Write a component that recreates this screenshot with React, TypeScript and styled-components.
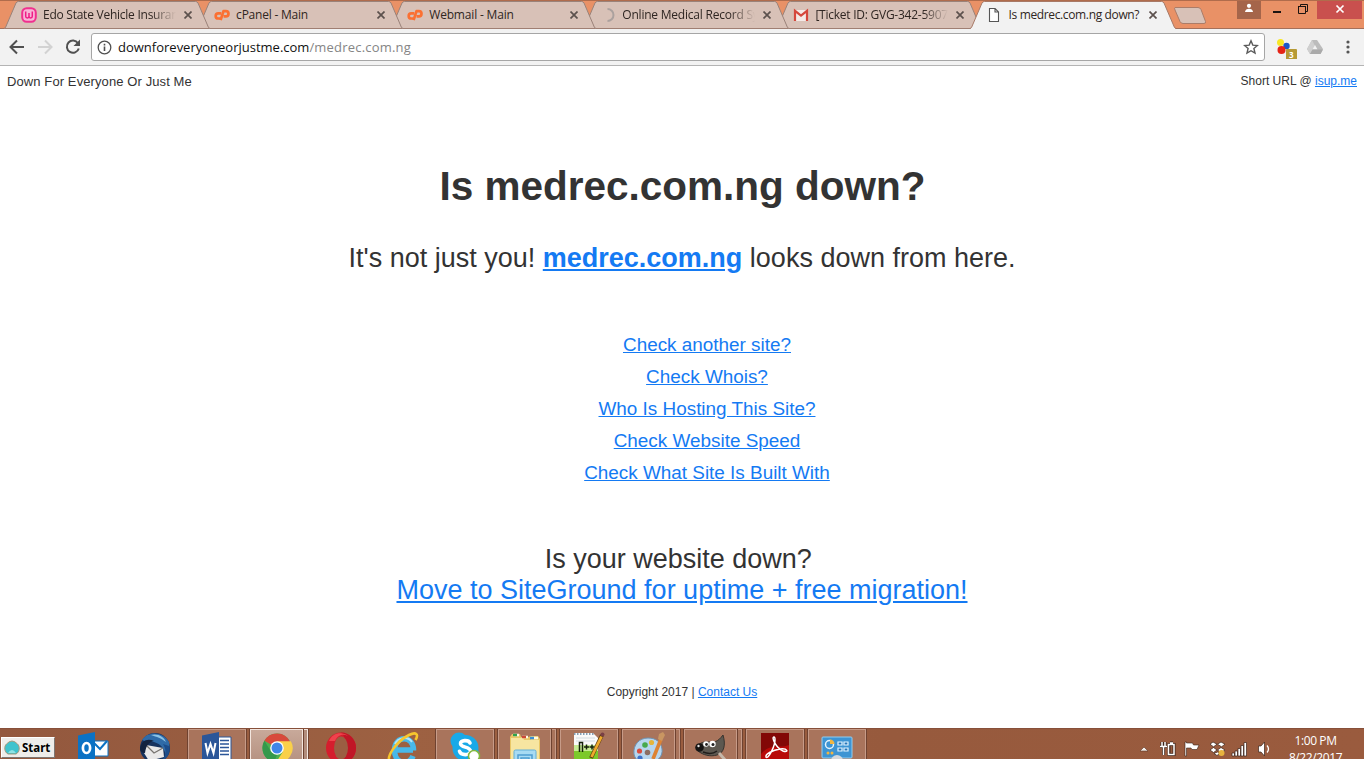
import React from "react";
import styled, { createGlobalStyle, css } from "styled-components";

const GlobalStyle = createGlobalStyle`
  *, *::before, *::after { box-sizing: border-box; }
  html, body { margin: 0; padding: 0; background: #fff; overflow: hidden; }
  svg { display: block; flex: none; }
`;

const uiFont = `"Open Sans", "Noto Sans", sans-serif`;

const Screen = styled.div`
  width: 1364px;
  height: 759px;
  display: flex;
  flex-direction: column;
  overflow: hidden;
  font-family: "Liberation Sans", Arial, sans-serif;
  color: #333;
`;

/* ---------- Browser frame ---------- */

const TitleBar = styled.header`
  flex: none;
  height: 29px;
  display: flex;
  background: #e99166;
  border-top: 1px solid #b06c4c;
  box-shadow: inset 0 -1px 0 #a4705a;
  padding-left: 4px;
`;

const TabItem = styled.div<{ $layer: number }>`
  position: relative;
  z-index: ${(p) => p.$layer};
  flex: none;
  width: 206px;
  height: 28px;
  margin-right: -12.9px;
  padding-left: 17px;
  display: flex;
  align-items: center;
  isolation: isolate;
`;

const TabShape = styled.svg`
  position: absolute;
  inset: 0;
  z-index: -1;
`;

const Favicon = styled.svg`
  width: 16px;
  height: 16px;
`;

const TabLabel = styled.span<{ $track: number; $fade?: boolean }>`
  width: 133px;
  margin-left: 6px;
  overflow: hidden;
  white-space: nowrap;
  font: 12px/18px ${uiFont};
  letter-spacing: ${(p) => p.$track}px;
  color: #2f2622;
  ${(p) =>
    p.$fade &&
    css`
      mask-image: linear-gradient(to right, #000 108px, transparent 133px);
    `}
`;

const CloseIcon = styled.svg`
  margin-left: 7.500px;
`;

const NewTab = styled.svg`
  margin: 5px 0 0 5px;
`;

const WindowControls = styled.div`
  display: flex;
  align-items: flex-start;
  margin-left: auto;
  padding-right: 2px;
`;

const ControlButton = styled.div<{ $w: number; $bg?: string }>`
  width: ${(p) => p.$w}px;
  height: 18px;
  display: flex;
  justify-content: center;
  background: ${(p) => p.$bg ?? "transparent"};
`;

const Toolbar = styled.div`
  flex: none;
  height: 37px;
  display: flex;
  align-items: center;
  background: #f2f2f2;
  border-bottom: 1px solid #b4b4b4;
  padding: 0 7px 0 8px;
`;

const NavIcons = styled.div`
  width: 83px;
  display: flex;
  gap: 10px;
`;

const Omnibox = styled.div`
  width: 1174px;
  height: 28px;
  display: flex;
  align-items: center;
  background: #fff;
  border: 1px solid #a6a6a6;
  border-radius: 3px;
  padding: 0 5px;
`;

const Url = styled.span`
  flex: 1;
  margin-left: 6px;
  font: 13px/20px ${uiFont};
  color: #111;
`;

const UrlPath = styled.span`
  color: #858585;
  letter-spacing: 0.2px;
`;

const Extensions = styled.div`
  flex: 1;
  display: flex;
  align-items: center;
  padding-left: 11px;
`;

const DriveIcon = styled.svg`
  margin-left: 8px;
`;

const MenuDots = styled.svg`
  margin-left: 22px;
`;

/* ---------- Page ---------- */

const Page = styled.main`
  flex: 1;
  min-height: 0;
  display: flex;
  flex-direction: column;
  background: #fff;
`;

const PageTop = styled.div`
  height: 30px;
  display: flex;
  justify-content: space-between;
  padding: 7px 7px 0;
`;

const SiteName = styled.span`
  font-size: 13px;
  line-height: 17px;
  letter-spacing: 0.1px;
`;

const ShortUrl = styled.span`
  font-size: 12px;
  line-height: 16px;
`;

const Link = styled.a`
  color: #147af3;
  text-decoration: underline;
`;

const Heading = styled.h1`
  margin: 66px 0 0;
  padding-left: 1px;
  font-size: 40.5px;
  line-height: 48px;
  text-align: center;
`;

const Verdict = styled.p`
  margin: 32px 0 0;
  font-size: 27px;
  line-height: 32px;
  text-align: center;
`;

const LinkList = styled.ul`
  list-style: none;
  margin: 55px 0 0;
  padding: 0 0 0 50px;
  font-size: 18.9px;
  line-height: 32px;
  text-align: center;
`;

const Promo = styled.p`
  margin: 55px 0 0;
  font-size: 27px;
  line-height: 31px;
  text-align: center;
`;

const Footer = styled.footer`
  margin-top: 78px;
  font-size: 12px;
  line-height: 16px;
  text-align: center;
`;

/* ---------- Taskbar ---------- */

const Taskbar = styled.footer`
  flex: none;
  height: 31px;
  display: flex;
  align-items: flex-start;
  overflow: hidden;
  background: linear-gradient(to right, #93583e, #9d6142 30%, #975a3d 65%, #9a5b3e);
  border-top: 1px solid #87503a;
`;

const StartButton = styled.div`
  width: 54px;
  height: 21px;
  margin: 8px 9px 0 1px;
  display: flex;
  align-items: center;
  gap: 2px;
  padding-left: 2px;
  background: #efedea;
  border: 1px solid #fff;
  border-right-color: #7d7672;
  border-bottom-color: #7d7672;
  font: bold 11.5px/18px "Noto Sans", "DejaVu Sans", sans-serif;
  letter-spacing: 0;
  color: #000;
`;

const TaskSlot = styled.div`
  flex: none;
  width: 62px;
  height: 40px;
  display: flex;
`;

const TaskButton = styled.div<{ $kind: "idle" | "open" | "stack" | "active" }>`
  width: ${(p) => (p.$kind === "stack" || p.$kind === "active" ? 53 : 58)}px;
  height: 40px;
  padding-top: 3px;
  display: flex;
  justify-content: center;
  ${(p) =>
    p.$kind !== "idle" &&
    css`
      background: ${p.$kind === "active" ? "linear-gradient(#c8a99a, #b28d7c)" : "#a9745c"};
      border: 1px solid ${p.$kind === "active" ? "#f3e6df" : "#c79b88"};
      box-shadow: 0 0 0 1px #6f4230;
      padding-top: 2px;
    `}
`;

const StackEdge = styled.div<{ $light?: boolean }>`
  width: 4px;
  height: 40px;
  margin-left: 1px;
  background: ${(p) => (p.$light ? "#b28d7c" : "#a9745c")};
  border: solid ${(p) => (p.$light ? "#f3e6df" : "#c79b88")};
  border-width: 1px 1px 0 0;
  box-shadow: 1px 0 0 #6f4230;
`;

const Tray = styled.div`
  margin-left: auto;
  display: flex;
  align-items: flex-start;
  padding-top: 11px;
`;

const Clock = styled.div`
  width: 75px;
  margin: -8px 11px 0 6px;
  font: 12px/17px ${uiFont};
  letter-spacing: -0.4px;
  color: #fff;
  text-align: center;
`;

/* ---------- Tab favicons ---------- */

const WIcon = () => (
  <Favicon viewBox="0 0 16 16">
    <rect x="1.200" y="1.200" width="13.600" height="13.600" rx="4.500" fill="#f9b4d6" stroke="#f0308f" strokeWidth="2" />
    <path d="M4.700 4.500v4.800a1.650 1.650 0 0 0 3.300 0V6v3.300a1.650 1.650 0 0 0 3.300 0V4.500" fill="none" stroke="#ee1d86" strokeWidth="1.500" />
  </Favicon>
);

const CpIcon = () => (
  <Favicon viewBox="0 0 16 16">
    <path d="M7.300 6.300H4.300a2.600 2.600 0 0 0 0 5.200H6" fill="none" stroke="#fb7032" strokeWidth="2.700" />
    <path d="M6.600 13.200L9.500 4.200h2.400a2.600 2.600 0 0 1 0 5.200H9.600" fill="none" stroke="#fb7032" strokeWidth="2.700" strokeLinejoin="round" />
  </Favicon>
);

const SpinnerIcon = () => (
  <Favicon viewBox="0 0 16 16">
    <path d="M7.500 2a6 6 0 0 1 0 12" fill="none" stroke="#aba19e" strokeWidth="2" />
  </Favicon>
);

const GmailIcon = () => (
  <Favicon viewBox="0 0 16 16">
    <path d="M1 3h14v11H1z" fill="#f4eae7" />
    <path d="M2 14V3.800L8 8.600l6-4.800V14" fill="none" stroke="#d5473c" strokeWidth="2.200" />
  </Favicon>
);

const PageIcon = () => (
  <Favicon viewBox="0 0 16 16">
    <path d="M2.500 1.500h5.600l3.400 3.400v9.600h-9zM8 1.500V5h3.500" fill="#fff" stroke="#555" strokeWidth="1.100" />
  </Favicon>
);

/* ---------- Taskbar pictures ---------- */

const Pic = ({ children }: { children: React.ReactNode }) => (
  <svg width="32" height="32" viewBox="0 0 32 32">
    {children}
  </svg>
);

const OutlookPic = () => (
  <Pic>
    <path d="M17 9h14v15H17z" fill="#fff" stroke="#0b72c4" />
    <path d="M17 11l6 6 7-8" fill="none" stroke="#0b72c4" strokeWidth="2" />
    <path d="M1 3.500L18 0v31L1 28z" fill="#0b72c4" />
    <ellipse cx="9.500" cy="16" rx="3.600" ry="5" fill="none" stroke="#fff" strokeWidth="2.700" />
  </Pic>
);

const ThunderbirdPic = () => (
  <Pic>
    <circle cx="16" cy="16" r="15" fill="#17335f" />
    <path d="M3 8C9-2 25 0 30 10c1 6 0 11-3 15-1-8-5-13-12-15-5-1-9 0-12-2z" fill="#2f6ba8" />
    <path d="M12 3c7-2 13 2 15 7-5-4-9-5-15-7z" fill="#8cc3e4" />
    <path d="M7 13l17 3 1 9-15 4-5-8z" fill="#e9e8e8" />
    <path d="M7 13l8 8 9-5" fill="none" stroke="#76736f" strokeWidth="1.300" />
    <path d="M1 17C2 9 8 6 15 9c-5 1-8 4-9 12-3 0-5-2-5-4z" fill="#12223f" />
    <path d="M24 12c4 6 3 12-2 17 7-2 10-9 8-15z" fill="#1c4c8a" />
  </Pic>
);

const WordPic = () => (
  <Pic>
    <path d="M16 5h14v24H16z" fill="#fff" stroke="#2b5699" />
    <path d="M19 8.500h9M19 12h9M19 15.500h9M19 19h9M19 22.500h9" stroke="#2b5699" strokeWidth="1.400" />
    <path d="M1 3.500L18 0v31L1 28z" fill="#2b5699" />
    <path d="M4.500 11l2 10 3-9 3 9 2-10" fill="none" stroke="#fff" strokeWidth="2" />
  </Pic>
);

const ChromePic = () => (
  <Pic>
    <circle cx="16" cy="16" r="14.500" fill="#4caf50" />
    <path d="M16 16L3.400 8.700A14.500 14.500 0 0 1 29 9.500z" fill="#d84a3c" />
    <path d="M16 9.300h13.900A14.500 14.500 0 0 1 15 30.500l7-11z" fill="#f9d04a" />
    <path d="M3.400 8.700l7 11.500 5.600 3-3 7A14.500 14.500 0 0 1 3.400 8.700z" fill="#35984b" />
    <circle cx="16" cy="16" r="6.800" fill="#fff" />
    <circle cx="16" cy="16" r="5.500" fill="#3f86e8" />
  </Pic>
);

const OperaPic = () => (
  <Pic>
    <ellipse cx="16" cy="16" rx="15" ry="15.500" fill="#d51e2d" />
    <path d="M16 .5a15 15.500 0 0 1 0 31c6-4 8-24 0-31z" fill="#c01626" />
    <ellipse cx="16" cy="16" rx="7" ry="11.500" fill="#9b5e42" />
    <path d="M4 9C7 1 17-1 23 4 17 1 12 4 10 9z" fill="#f0424c" />
  </Pic>
);

const IePic = () => (
  <Pic>
    <path d="M9 18h17M26.500 18.500C27 3 7.500 3 7.500 18s15 15.500 18.500 6" fill="none" stroke="#48b9ea" strokeWidth="5.500" />
    <path d="M8 12c3-7 13-8 17-2" fill="none" stroke="#b3e6fa" strokeWidth="2" />
    <path d="M4 31C-3 26 10 9 22 3c7-3.500 10-1 6.500 5" fill="none" stroke="#f6c62e" strokeWidth="2.600" />
  </Pic>
);

const SkypePic = () => (
  <Pic>
    <circle cx="10" cy="9" r="8.500" fill="#18a9e8" />
    <circle cx="22" cy="23" r="8.500" fill="#18a9e8" />
    <circle cx="16.500" cy="16" r="13" fill="#18a9e8" />
    <path d="M21 11c-1.500-3.500-10-3-9.500.8.500 4.200 10 2.500 10 7.500 0 4.200-9.500 4.700-11 0" fill="none" stroke="#fff" strokeWidth="3.600" strokeLinecap="round" />
    <circle cx="25" cy="24" r="5.500" fill="#fff" stroke="#82b83c" strokeWidth="1.500" />
  </Pic>
);

const ExplorerPic = () => (
  <Pic>
    <path d="M1 5l2-3h8l1 3h8l1-1h8l2 3v24H1z" fill="#e9c766" />
    <path d="M2 6h12l1 2h15v23H2z" fill="#f7e5a1" />
    <path d="M4 3h6M13 5h6M22 6h7" stroke="#fffbe7" strokeWidth="2.500" />
    <path d="M4 3h4" stroke="#30a34d" strokeWidth="2.500" />
    <path d="M13 5h4" stroke="#cc4a38" strokeWidth="2.500" />
    <path d="M21 6h4" stroke="#3c8fd2" strokeWidth="2.500" />
    <rect x="5" y="18" width="22" height="14" rx="1.500" fill="#a7dbf3" stroke="#62afd8" />
    <path d="M9 32v-9h14v9M12 32v-6h8v6" fill="none" stroke="#4f9fd2" strokeWidth="1.500" />
  </Pic>
);

const NotepadPic = () => (
  <Pic>
    <path d="M1 1h19l5 5v26H1z" fill="#fafafa" />
    <path d="M1 18h24v14H1z" fill="#7cc92b" />
    <path d="M1 13h24v6H1z" fill="#c6ec94" />
    <path d="M1 2h20" stroke="#85a0b5" strokeWidth="2" strokeDasharray="1.500 1.500" />
    <path d="M3 6h19M3 9h19" stroke="#c9d4da" strokeWidth=".8" />
    <path d="M6.500 20V10.500H9.500V20M11 15h5M13.500 12.500v5M16.500 15h5M19 12.500v5" fill="none" stroke="#15220c" strokeWidth="1.500" />
    <path d="M29 3L18 26" stroke="#5d3d12" strokeWidth="4" />
    <path d="M28.500 4.500L18.500 25" stroke="#efa92d" strokeWidth="2.800" />
    <circle cx="29.500" cy="2.500" r="2" fill="#7a3f45" />
  </Pic>
);

const PaintPic = () => (
  <Pic>
    <path d="M15 6C6 6 0 13 1 22c1 6 7 10 15 9 9-1 14-7 13-14S23 6 15 6z" fill="#b7d6ee" stroke="#6d93b4" />
    <circle cx="6.500" cy="19" r="2.600" fill="#d94d3f" />
    <circle cx="12" cy="13" r="2.800" fill="#47a94d" />
    <circle cx="18.500" cy="10.500" r="2.600" fill="#e5b53b" />
    <circle cx="14.500" cy="20.500" r="2.800" fill="#8b6e63" />
    <circle cx="7" cy="26" r="2.600" fill="#3b70c9" />
    <path d="M28 7L20 27" stroke="#dd8333" strokeWidth="3.600" />
    <path d="M25 7l1-5 4-2 2 3-3 6z" fill="#c99662" />
  </Pic>
);

const GimpPic = () => (
  <Pic>
    <path d="M3 14c3-5 9-4 12-4 3 1 8 0 13-7 3 10 1 18-6 20-7 2-14 0-19-4z" fill="#5d5850" stroke="#37332e" />
    <circle cx="4.500" cy="15.500" r="4.300" fill="#161514" />
    <circle cx="3.500" cy="14" r="1.200" fill="#e2e2e2" />
    <circle cx="11" cy="12" r="2.800" fill="#fff" />
    <circle cx="17.500" cy="12" r="3.200" fill="#fff" />
    <circle cx="11.500" cy="12.500" r="1.400" fill="#222" />
    <circle cx="18" cy="12.500" r="1.500" fill="#222" />
    <path d="M8 20c5 2 10 2 14-1" fill="none" stroke="#201e1b" strokeWidth="1.500" />
    <path d="M24 21l7 8" stroke="#c5b7a9" strokeWidth="3" />
  </Pic>
);

const AcrobatPic = () => (
  <Pic>
    <path d="M2 1h28v31H2z" fill="#b80a08" />
    <path d="M2 1h28v12C21 17 12 10 2 22z" fill="#820806" />
    <path d="M15 5c-3 0 2 11 9 14 6 2 5-3-3-2-7 1-15 5-14 8 2 3 9-11 9-17 0-2 0-3-1-3z" fill="none" stroke="#fff" strokeWidth="1.500" />
  </Pic>
);

const ControlPanelPic = () => (
  <Pic>
    <rect x="1" y="5" width="30" height="21" rx="1" fill="#3d94d3" stroke="#91cdf0" />
    <circle cx="8.500" cy="12.500" r="4" fill="none" stroke="#e5f3fb" strokeWidth="1.500" />
    <path d="M9 12V7.500a4.500 4.500 0 0 1 4.500 4.500z" fill="#f2b640" />
    <path d="M17 10h4v3h-4zM23 10h4v3h-4zM17 16h4v3h-4zM23 16h4v3h-4z" fill="#2676b8" stroke="#e2f4ff" strokeWidth="1.200" />
    <circle cx="7" cy="21" r="1.500" fill="#f2b640" />
    <circle cx="11" cy="21" r="1.500" fill="#f2b640" />
    <circle cx="16" cy="29" r="6" fill="#d4d8dc" />
  </Pic>
);

/* ---------- Data ---------- */

const tabs = [
  { label: "Edo State Vehicle Insurance", Icon: WIcon, track: -0.25, fade: true },
  { label: "cPanel - Main", Icon: CpIcon, track: -0.23 },
  { label: "Webmail - Main", Icon: CpIcon, track: -0.17 },
  { label: "Online Medical Record Sys", Icon: SpinnerIcon, track: -0.22, fade: true },
  { label: "[Ticket ID: GVG-342-59073", Icon: GmailIcon, track: -0.25, fade: true },
  { label: "Is medrec.com.ng down?", Icon: PageIcon, track: -0.36, active: true },
];

const links = [
  "Check another site?",
  "Check Whois?",
  "Who Is Hosting This Site?",
  "Check Website Speed",
  "Check What Site Is Built With",
];

const tasks = [
  { kind: "idle", Art: OutlookPic },
  { kind: "idle", Art: ThunderbirdPic },
  { kind: "open", Art: WordPic },
  { kind: "active", Art: ChromePic },
  { kind: "idle", Art: OperaPic },
  { kind: "idle", Art: IePic },
  { kind: "open", Art: SkypePic },
  { kind: "stack", Art: ExplorerPic },
  { kind: "open", Art: NotepadPic },
  { kind: "stack", Art: PaintPic },
  { kind: "stack", Art: GimpPic },
  { kind: "open", Art: AcrobatPic },
  { kind: "open", Art: ControlPanelPic },
] as const;

/* ---------- Composition ---------- */

const Tabs = () => (
  <>
    {tabs.map(({ label, Icon, track, fade, active }, i) => (
      <TabItem key={label} $layer={active ? 10 : tabs.length - i}>
        <TabShape width="206" height="28" viewBox="0 0 206 28">
          <path
            d="M0 27.500L1.500 26.500L12 2Q12.800 .5 14.500 .5H191.500Q193.200 .5 194 2L204.500 26.500L206 27.500"
            fill={active ? "#f2f2f2" : "#d8c1b7"}
            stroke={active ? "#a87966" : "#9a8279"}
          />
          <path d="M1 27.500H205" stroke={active ? "#f2f2f2" : "#a07f73"} />
        </TabShape>
        <Icon />
        <TabLabel $track={track} $fade={fade}>
          {label}
        </TabLabel>
        <CloseIcon width="8" height="8" viewBox="0 0 8 8">
          <path d="M.5 .5l7 7M7.500 .5l-7 7" stroke="#5c514d" strokeWidth="1.700" />
        </CloseIcon>
      </TabItem>
    ))}
  </>
);

const Controls = () => (
  <WindowControls>
    <ControlButton $w={24} $bg="#a5654a">
      <svg width="10" height="12" viewBox="0 0 10 12">
        <circle cx="5" cy="4.800" r="2.100" fill="#fff" />
        <path d="M1 11c0-4.500 8-4.500 8 0z" fill="#fff" />
      </svg>
    </ControlButton>
    <ControlButton $w={32}>
      <svg width="10" height="14" viewBox="0 0 10 14">
        <path d="M1 11h8" stroke="#1b1411" strokeWidth="2" />
      </svg>
    </ControlButton>
    <ControlButton $w={20}>
      <svg width="12" height="14" viewBox="0 0 12 14">
        <path d="M1.500 5.500h7v7h-7zM1 5.500h8M3.500 5V3.500h7v7H9" fill="none" stroke="#1b1411" />
      </svg>
    </ControlButton>
    <ControlButton $w={4} />
    <ControlButton $w={45} $bg="#c9504e">
      <svg width="10" height="14" viewBox="0 0 10 14">
        <path d="M1.500 4.500l7 7M8.500 4.500l-7 7" stroke="#fff" strokeWidth="1.700" />
      </svg>
    </ControlButton>
  </WindowControls>
);

export default function App() {
  return (
    <Screen>
      <GlobalStyle />
      <TitleBar>
        <Tabs />
        <NewTab width="40" height="20" viewBox="0 0 40 20">
          <path d="M7 1.500h23q2 0 3 2l4.500 12q.5 2-1.500 2H15q-2 0-3-2L7 4q-1-2.500 0-2.500z" fill="#d8c1b7" stroke="#ab7c68" />
        </NewTab>
        <Controls />
      </TitleBar>
      <Toolbar>
        <NavIcons>
          <svg width="18" height="18" viewBox="0 0 18 18">
            <path d="M16 9H3M9 2.500L2.500 9 9 15.500" fill="none" stroke="#505050" strokeWidth="2" />
          </svg>
          <svg width="18" height="18" viewBox="0 0 18 18">
            <path d="M2 9h13M9 2.500L15.500 9 9 15.500" fill="none" stroke="#d2d2d2" strokeWidth="2" />
          </svg>
          <svg width="18" height="18" viewBox="0 0 18 18">
            <path d="M14 5.200A6.100 6.100 0 1 0 14.800 10.500" fill="none" stroke="#505050" strokeWidth="2" />
            <path d="M16 1.500v6.500H9.500z" fill="#505050" />
          </svg>
        </NavIcons>
        <Omnibox>
          <svg width="15" height="15" viewBox="0 0 15 15">
            <circle cx="7.500" cy="7.500" r="6.300" fill="none" stroke="#505050" strokeWidth="1.300" />
            <path d="M7.500 6.500v4.500M7.500 3.800v1.600" stroke="#505050" strokeWidth="1.600" />
          </svg>
          <Url>
            downforeveryoneorjustme.com<UrlPath>/medrec.com.ng</UrlPath>
          </Url>
          <svg width="16" height="16" viewBox="0 0 16 16">
            <path d="M8 1.800l1.800 4.300 4.600.4-3.500 3 1.100 4.600L8 11.700l-4 2.400 1.100-4.600-3.500-3 4.600-.4z" fill="none" stroke="#5a5a5a" strokeWidth="1.400" />
          </svg>
        </Omnibox>
        <Extensions>
          <svg width="22" height="24" viewBox="0 0 22 24">
            <circle cx="4.500" cy="7.500" r="3.500" fill="#f7e725" />
            <circle cx="10.500" cy="11" r="3.200" fill="#1857c8" />
            <circle cx="5.500" cy="15" r="4" fill="#e52316" />
            <rect x="10" y="14" width="11" height="11" rx="1" fill="#b69a35" />
            <text x="13" y="22.800" fontFamily="Open Sans" fontSize="8" fontWeight="700" fill="#fff">3</text>
          </svg>
          <DriveIcon width="18" height="16" viewBox="0 0 18 16">
            <path d="M6 1h5l6 9-2.500 5H4L1 10z" fill="#bcbcbc" />
            <path d="M6 1L1 10l3 5 5-8z" fill="#cfcfcf" />
            <path d="M9 6l2.500 4.500h-5z" fill="#f2f2f2" />
            <path d="M6.500 10.500H17L14.500 15H4z" fill="#aaa" />
          </DriveIcon>
          <MenuDots width="4" height="16" viewBox="0 0 4 16">
            <circle cx="2" cy="3" r="1.600" fill="#555" />
            <circle cx="2" cy="8" r="1.600" fill="#555" />
            <circle cx="2" cy="13" r="1.600" fill="#555" />
          </MenuDots>
        </Extensions>
      </Toolbar>

      <Page>
        <PageTop>
          <SiteName>Down For Everyone Or Just Me</SiteName>
          <ShortUrl>
            Short URL @ <Link>isup.me</Link>
          </ShortUrl>
        </PageTop>
        <Heading>Is medrec.com.ng down?</Heading>
        <Verdict>
          It's not just you! <Link as="strong">medrec.com.ng</Link> looks down from here.
        </Verdict>
        <LinkList>
          {links.map((text) => (
            <li key={text}>
              <Link>{text}</Link>
            </li>
          ))}
        </LinkList>
        <Promo>
          Is your website down?&nbsp;
          <br />
          <Link>Move to SiteGround for uptime + free migration!</Link>
        </Promo>
        <Footer>
          Copyright 2017 | <Link>Contact Us</Link>
        </Footer>
      </Page>

      <Taskbar>
        <StartButton>
          <svg width="16" height="15" viewBox="0 0 16 15">
            <path d="M4 14C0 12 0 6 2.500 4q5.500-6 11 0C16 6 16 12 12 14z" fill="#3fc3cd" stroke="#a49a7d" />
            <path d="M4 13q4-6 8 0z" fill="#8fe3e4" />
          </svg>
          Start
        </StartButton>
        {tasks.map(({ kind, Art }, i) => (
          <TaskSlot key={i}>
            <TaskButton $kind={kind}>
              <Art />
            </TaskButton>
            {(kind === "stack" || kind === "active") && <StackEdge $light={kind === "active"} />}
          </TaskSlot>
        ))}
        <Tray>
          <svg width="132" height="18" viewBox="0 0 132 18">
            <path d="M0 11l4-4 4 4z" fill="#f4efec" stroke="#5a3626" strokeWidth=".6" />
            <path
              d="M22 2v4M25 2v4M20 6.500h7M23.500 6v9M29 4.500h5v10h-5zM30 3h3"
              fill="none"
              stroke="#3b241a"
              strokeWidth="3"
            />
            <path d="M22 2v4M25 2v4M20 6.500h7M23.500 6v9M28.500 4.500h5.500v10h-5.500zM30 3h3" fill="none" stroke="#fff" strokeWidth="1.500" />
            <path d="M45 2h1.500v1h6l1 2h5.500l-2 4.500h-5l-1-1.500h-4.500V16H45z" fill="#fff" stroke="#3b241a" strokeWidth=".6" />
            <g fill="#fff" stroke="#3b241a" strokeWidth=".7">
              <path d="M73 2l4 2.200-3.500 2.600-3.500-2.600zM81 2l4 2.200-3.500 2.600-4-2.600zM73.500 7.500l3.500 2.500-3.500 2.500L70 10zM81 7.500l4 2.500-4 2.500-3.500-2.500zM74 13.500l3.500-1.500 2 1.500-2.500 2z" />
              <path d="M92 13h2.500v3H92zM95 11h2.500v5H95zM98 8.500h2.500V16H98zM101 5.500h2.500V16H101zM104 2.500h2.500V16H104z" />
              <path d="M118.500 6h2.500L124.500 2v14l-3.500-4h-2.500z" />
            </g>
            <circle cx="81.500" cy="13" r="3" fill="#e7b33e" />
            <path d="M127 5.500q3 3.500 0 7" fill="none" stroke="#fff" strokeWidth="1.300" />
          </svg>
          <Clock>
            1:00 PM
            <br />
            8/22/2017
          </Clock>
        </Tray>
      </Taskbar>
    </Screen>
  );
}
